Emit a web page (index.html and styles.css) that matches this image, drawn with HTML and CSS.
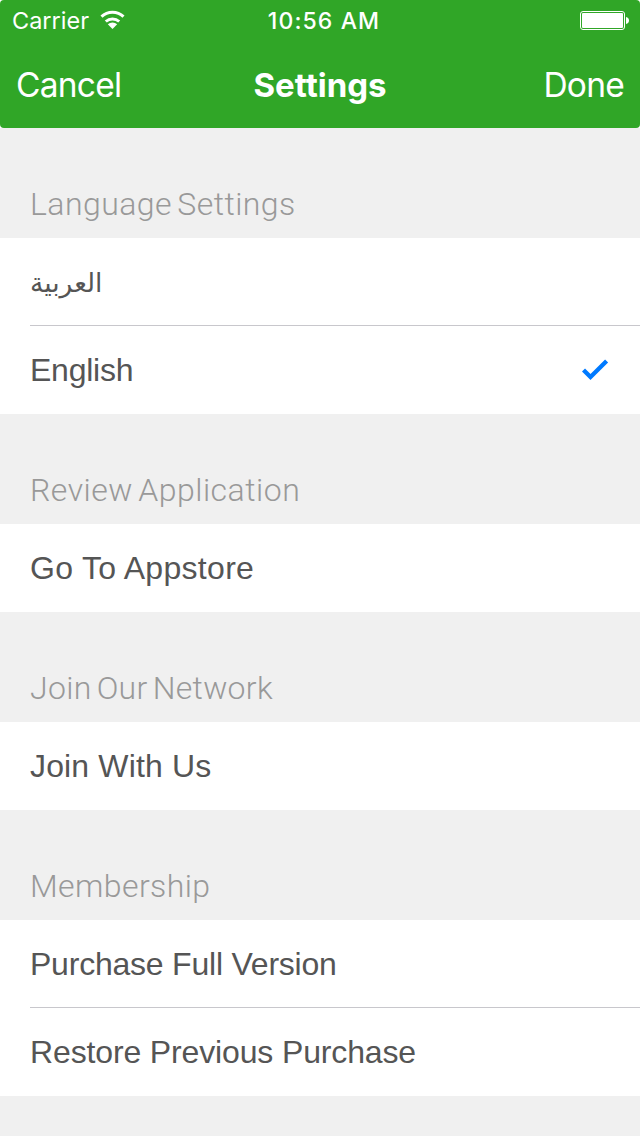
FILE: index.html
```html
<!DOCTYPE html>
<html lang="en">
<head>
  <meta charset="UTF-8">
  <meta name="viewport" content="width=device-width, initial-scale=1.0">
  <title>Settings</title>
  <link rel="stylesheet" href="styles.css">
</head>
<body>
  <div class="top">
    <header class="header">
      <div class="status-bar">
        <div class="carrier">
          <span class="carrier-name">Carrier</span>
          <svg class="wifi" width="27" height="20" viewBox="0 0 27 20">
            <path d="M2.500 6.700a16 16 0 0 1 22 0" fill="none" stroke="#fff" stroke-width="3"/>
            <path d="M6.800 11.500a10 10 0 0 1 13.400 0" fill="none" stroke="#fff" stroke-width="3"/>
            <path d="M13.500 19l-4.700-4.700a7 7 0 0 1 9.400 0z" fill="#fff"/>
          </svg>
        </div>
        <span class="time">10:56 AM</span>
        <svg class="battery" width="50" height="20" viewBox="0 0 50 20">
          <rect x="0.5" y="0.5" width="44" height="18" rx="2.5" fill="none" stroke="#fff"/>
          <rect x="2" y="2" width="41" height="15" rx="1" fill="#fff"/>
          <path d="M46 6c2 0.600 3 1.800 3 3.500s-1 2.900-3 3.500z" fill="#fff"/>
        </svg>
      </div>
      <div class="nav-bar">
        <a class="nav-button">Cancel</a>
        <h1>Settings</h1>
        <a class="nav-button done">Done</a>
      </div>
    </header>
  </div>
  <main>
    <section>
      <h2>Language Settings</h2>
      <ul>
        <li><span class="arabic" lang="ar" dir="rtl">العربية</span></li>
        <li>
          <span class="english">English</span>
          <svg class="check" width="28" height="24" viewBox="0 0 28 24">
            <path d="M1.500 12l7 7L24.600 3" fill="none" stroke="#007aff" stroke-width="4.300"/>
          </svg>
        </li>
      </ul>
    </section>
    <section>
      <h2 class="review">Review Application</h2>
      <ul>
        <li><span class="appstore">Go To Appstore</span></li>
      </ul>
    </section>
    <section>
      <h2 class="network">Join Our Network</h2>
      <ul>
        <li><span class="join">Join With Us</span></li>
      </ul>
    </section>
    <section>
      <h2 class="membership">Membership</h2>
      <ul>
        <li><span class="purchase">Purchase Full Version</span></li>
        <li><span class="restore">Restore Previous Purchase</span></li>
      </ul>
    </section>
  </main>
</body>
</html>
```
FILE: styles.css
```css
body {
  margin: 0;
  min-height: 1136px;
  background: #f0f0f0;
  color: #555555;
  font-family: "Liberation Sans", Arial, sans-serif;
  overflow: hidden;
}

/* white shows behind the rounded header corners */
.top {
  background: #ffffff;
}

.header {
  height: 128px;
  background: #30a627;
  border-radius: 4px;
  color: #ffffff;
  font-family: Inter, sans-serif;
}

.status-bar {
  display: grid;
  grid-template-columns: 1fr auto 1fr;
  height: 40px;
  padding: 0 10px 0 12px;
  box-sizing: border-box;
  align-items: center;
  line-height: 39px;
}

.carrier {
  display: flex;
  align-items: center;
  gap: 10px;
}

.carrier-name {
  font-size: 23.5px;
}

.wifi {
  margin-bottom: 2px;
}

.time {
  padding: 2px 0 0 6px;
  font-size: 23px;
  font-weight: 500;
  letter-spacing: 1.1px;
}

.battery {
  justify-self: end;
}

.nav-bar {
  display: grid;
  grid-template-columns: 1fr auto 1fr;
  height: 88px;
  padding: 0 16px;
  box-sizing: border-box;
  align-items: center;
}

.nav-button {
  font-size: 33.5px;
  font-weight: 370;
  line-height: 88px;
  letter-spacing: -0.75px;
}

.done {
  text-align: right;
}

h1 {
  margin: 0;
  font-size: 33px;
  font-weight: 650;
  line-height: 90px;
}

h2 {
  height: 110px;
  margin: 0;
  padding: 59px 30px 0;
  box-sizing: border-box;
  color: #999999;
  font-family: Roboto, sans-serif;
  font-size: 32px;
  font-weight: 350;
  letter-spacing: 0.45px;
  word-spacing: -3px;
  line-height: 34px;
}

.review {
  letter-spacing: 0.5px;
}

.network {
  letter-spacing: 0.3px;
}

.membership {
  letter-spacing: 0.4px;
}

ul {
  margin: 0;
  padding: 0 0 0 30px;
  background: #ffffff;
  list-style: none;
}

li {
  display: flex;
  height: 88px;
  padding-right: 30px;
  box-sizing: border-box;
  align-items: center;
  justify-content: space-between;
  font-size: 32px;
}

li + li {
  box-shadow: 0 -1px #c8c7cc;
}

.arabic {
  font-family: "DejaVu Sans", sans-serif;
  font-size: 26.5px;
}

.english {
  letter-spacing: -0.25px;
}

.appstore {
  letter-spacing: 0.3px;
}

.join {
  letter-spacing: 0.15px;
}

.purchase {
  letter-spacing: -0.22px;
}

.restore {
  letter-spacing: -0.14px;
}
```
